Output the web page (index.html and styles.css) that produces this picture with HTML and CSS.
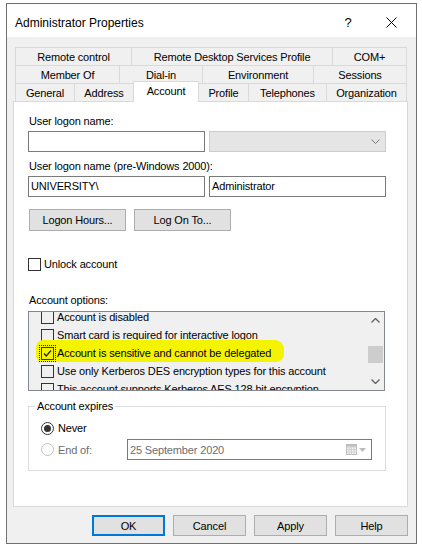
FILE: index.html
```html
<!DOCTYPE html>
<html>
<head>
<meta charset="utf-8">
<link rel="stylesheet" href="styles.css">
</head>
<body>
<div class="window">
  <div class="titlebar">
    <span class="title">Administrator Properties</span>
    <span class="cap cap-help">?</span>
    <span class="cap cap-close"><svg width="11" height="11" viewBox="0 0 11 11"><path d="M0.5 0.5 L10.5 10.5 M10.5 0.5 L0.5 10.5" stroke="#000" stroke-width="1" fill="none"/></svg></span>
  </div>
  <div class="client">
    <div class="tabs">
      <div class="tabrow">
        <div class="tab w116">Remote control</div>
        <div class="tab w201">Remote Desktop Services Profile</div>
        <div class="tab w75 last">COM+</div>
      </div>
      <div class="tabrow">
        <div class="tab w104">Member Of</div>
        <div class="tab w83">Dial-in</div>
        <div class="tab w111">Environment</div>
        <div class="tab w94 last">Sessions</div>
      </div>
      <div class="tabrow">
        <div class="tab w59">General</div>
        <div class="tab w59">Address</div>
        <div class="tab w66 selected">Account</div>
        <div class="tab w49 after-sel">Profile</div>
        <div class="tab w78">Telephones</div>
        <div class="tab w81 last">Organization</div>
      </div>
    </div>
    <div class="panel">
      <div class="lbl">User logon name:</div>
      <div class="field-row">
        <div class="input"></div>
        <div class="combo"><svg width="9" height="5" viewBox="0 0 9 5"><path d="M0.5 0.5 L4.5 4.5 L8.5 0.5" stroke="#7a7a7a" fill="none"/></svg></div>
      </div>
      <div class="lbl lbl2">User logon name (pre-Windows 2000):</div>
      <div class="field-row">
        <div class="input">UNIVERSITY\</div>
        <div class="input">Administrator</div>
      </div>
      <div class="btn-row">
        <button class="btn">Logon Hours...</button>
        <button class="btn">Log On To...</button>
      </div>
      <div class="check-row unlock">
        <span class="cb cb-white"></span>
        <span class="cb-text">Unlock account</span>
      </div>
      <div class="lbl lbl3">Account options:</div>
      <div class="list">
        <div class="list-items">
          <div class="item"><span class="cb"></span><span class="cb-text">Account is disabled</span></div>
          <div class="item"><span class="cb"></span><span class="cb-text">Smart card is required for interactive logon</span></div>
          <div class="item marked"><span class="cb checked focus"><svg width="11" height="11" viewBox="0 0 11 11"><path d="M2 5.5 L4.3 8 L9 2.5" stroke="#222" stroke-width="1.2" fill="none"/></svg></span><span class="cb-text">Account is sensitive and cannot be delegated</span></div>
          <div class="item"><span class="cb"></span><span class="cb-text">Use only Kerberos DES encryption types for this account</span></div>
          <div class="item"><span class="cb"></span><span class="cb-text">This account supports Kerberos AES 128 bit encryption.</span></div>
        </div>
        <div class="scrollbar">
          <div class="sb-arrow"><svg width="9" height="5" viewBox="0 0 9 5"><path d="M0.5 4.5 L4.5 0.5 L8.5 4.5" stroke="#606060" stroke-width="1.3" fill="none"/></svg></div>
          <div class="sb-track"><div class="sb-thumb"></div></div>
          <div class="sb-arrow"><svg width="9" height="5" viewBox="0 0 9 5"><path d="M0.5 0.5 L4.5 4.5 L8.5 0.5" stroke="#606060" stroke-width="1.3" fill="none"/></svg></div>
        </div>
      </div>
      <fieldset class="group">
        <legend>Account expires</legend>
        <div class="radio-row">
          <span class="radio on"></span>
          <span class="radio-text">Never</span>
        </div>
        <div class="radio-row row-end">
          <span class="radio off"></span>
          <span class="radio-text disabled endof">End of:</span>
          <div class="datepick">
            <span class="date-text">25 September 2020</span>
            <span class="date-icons">
              <svg width="11" height="11" viewBox="0 0 11 11"><rect x="0.5" y="0.5" width="10" height="10" fill="#f4f4f4" stroke="#bdbdbd"/><path d="M0.5 3 H10.5 M0.5 5.5 H10.5 M0.5 8 H10.5 M3 3 V10.5 M5.5 3 V10.5 M8 3 V10.5" stroke="#cfcfcf" stroke-width="1"/><rect x="0.5" y="0.5" width="10" height="2" fill="#bdbdbd"/></svg>
              <svg width="7" height="4" viewBox="0 0 7 4"><path d="M0 0 H7 L3.5 4 Z" fill="#bdbdbd"/></svg>
            </span>
          </div>
        </div>
      </fieldset>
    </div>
    <div class="footer">
      <button class="fbtn default">OK</button>
      <button class="fbtn">Cancel</button>
      <button class="fbtn">Apply</button>
      <button class="fbtn">Help</button>
    </div>
  </div>
</div>
</body>
</html>
```
FILE: styles.css
```css
html, body {
  margin: 0;
  padding: 0;
  background: #ffffff;
}
body {
  font-family: "Liberation Sans", Arial, sans-serif;
  font-size: 11px;
  color: #000;
}
.window {
  box-sizing: border-box;
  width: 411px;
  height: 541px;
  margin: 3px 0 0 6px;
  border: 1px solid #707070;
  background: #f0f0f0;
  display: flex;
  flex-direction: column;
}
.titlebar {
  box-sizing: border-box;
  height: 33px;
  padding: 4px 3px 0 8px;
  background: #fff;
  display: flex;
  align-items: center;
  font-size: 12px;
}
.title {
  flex: 1;
}
.cap {
  display: flex;
  align-items: center;
  justify-content: center;
  height: 100%;
}
.cap-help {
  width: 42px;
  font-size: 13px;
}
.cap-close {
  width: 44px;
}
.client {
  flex: 1;
  padding: 10px 8px 0 6px;
  display: flex;
  flex-direction: column;
  letter-spacing: -0.15px;
}
.tabrow {
  display: flex;
  align-items: flex-start;
  height: 18px;
  margin-left: 2px;
}
.tab {
  box-sizing: border-box;
  height: 18px;
  border-top: 1px solid #d9d9d9;
  border-left: 1px solid #d9d9d9;
  background: #f0f0f0;
  display: flex;
  align-items: center;
  justify-content: center;
  white-space: nowrap;
  flex: none;
}
.tab.last { border-right: 1px solid #d9d9d9; }
.tab.after-sel { border-left: none; }
.tab.selected {
  position: relative;
  z-index: 1;
  height: 21px;
  margin-top: -2px;
  border-right: 1px solid #d9d9d9;
  background: #fff;
  padding-bottom: 2px;
}
.w116 { width: 116px; }
.w201 { width: 201px; }
.w75 { width: 75px; }
.w104 { width: 104px; }
.w83 { width: 83px; }
.w111 { width: 111px; }
.w94 { width: 94px; }
.w59 { width: 59px; }
.w66 { width: 66px; }
.w49 { width: 49px; }
.w78 { width: 78px; }
.w81 { width: 81px; }

.panel {
  box-sizing: border-box;
  width: 395px;
  height: 406px;
  border: 1px solid #d9d9d9;
  background: #fff;
  padding: 12px 0 0 14px;
}
.lbl {
  height: 15px;
  line-height: 15px;
  padding-left: 1px;
}
.lbl2 { margin-top: 7px; }
.lbl3 { margin-top: 22px; }
.field-row {
  display: flex;
  gap: 4px;
  margin-top: 2px;
}
.input {
  box-sizing: border-box;
  width: 177px;
  height: 21px;
  border: 1px solid #7a7a7a;
  background: #fff;
  line-height: 19px;
  padding-left: 2px;
}
.combo {
  box-sizing: border-box;
  width: 177px;
  height: 21px;
  border: 1px solid #cccccc;
  background: #e5e5e5;
  display: flex;
  align-items: center;
  justify-content: flex-end;
  padding-right: 5px;
}
.btn-row {
  display: flex;
  gap: 8px;
  margin: 12px 0 0 1px;
}
.btn, .fbtn {
  box-sizing: border-box;
  font-family: inherit;
  font-size: 11px;
  letter-spacing: -0.15px;
  color: #000;
  background: #e1e1e1;
  border: 1px solid #adadad;
  padding: 0;
  margin: 0;
}
.btn {
  width: 97px;
  height: 22px;
}
.check-row {
  display: flex;
  align-items: center;
  height: 13px;
}
.unlock { margin-top: 27px; }
.cb {
  box-sizing: border-box;
  width: 13px;
  height: 13px;
  border: 1px solid #333;
  flex: none;
  display: flex;
  align-items: center;
  justify-content: center;
}
.cb-white { background: #fff; }
.cb-text {
  margin-left: 3px;
  white-space: nowrap;
  line-height: 15px;
}
.focus {
  outline: 1px dotted #222;
  outline-offset: 1px;
}
.list {
  box-sizing: border-box;
  width: 357px;
  height: 80px;
  margin-top: 3px;
  border: 1px solid #828790;
  background: #f0f0f0;
  display: flex;
  overflow: hidden;
}
.list-items {
  flex: 1;
  margin-top: -4px;
  overflow: hidden;
}
.item {
  position: relative;
  z-index: 0;
  height: 18px;
  display: flex;
  align-items: center;
  padding-left: 12px;
  white-space: nowrap;
}
.item.marked::before {
  content: "";
  position: absolute;
  z-index: -1;
  left: 7px;
  top: -4px;
  width: 248px;
  height: 22px;
  background: #f4f400;
  border-radius: 7px 9px 8px 6px;
}
.scrollbar {
  width: 17px;
  flex: none;
  display: flex;
  flex-direction: column;
  background: #f0f0f0;
}
.sb-arrow {
  height: 17px;
  display: flex;
  align-items: center;
  justify-content: center;
}
.sb-track {
  flex: 1;
  padding-top: 17px;
}
.sb-thumb {
  height: 17px;
  margin: 0 1px;
  background: #cdcdcd;
}
.group {
  box-sizing: border-box;
  width: 358px;
  margin: 8px 0 0 0;
  padding: 6px 0 10px 12px;
  border: 1px solid #dcdcdc;
  min-width: 0;
}
.group legend {
  padding: 0 2px;
  margin-left: -6px;
  line-height: 15px;
}
.radio-row {
  display: flex;
  align-items: center;
  height: 16px;
}
.row-end {
  height: 21px;
  margin-top: 3px;
}
.radio {
  box-sizing: border-box;
  width: 13px;
  height: 13px;
  border-radius: 50%;
  border: 1px solid #333;
  flex: none;
  display: flex;
  align-items: center;
  justify-content: center;
}
.radio.on::after {
  content: "";
  width: 7px;
  height: 7px;
  border-radius: 50%;
  background: #333;
}
.radio.off {
  border-color: #c2c2c2;
}
.radio-text {
  margin-left: 4px;
}
.disabled {
  color: #6d6d6d;
}
.endof {
  width: 69px;
}
.datepick {
  box-sizing: border-box;
  width: 245px;
  height: 21px;
  border: 1px solid #7a7a7a;
  background: #fff;
  display: flex;
  align-items: center;
  padding: 0 5px 0 2px;
  color: #6d6d6d;
}
.date-text {
  flex: 1;
}
.date-icons {
  display: flex;
  align-items: center;
  gap: 2px;
}
.footer {
  display: flex;
  justify-content: flex-end;
  gap: 8px;
  margin-top: 8px;
  padding-right: 0;
}
.fbtn {
  width: 73px;
  height: 21px;
}
.fbtn.default {
  border: 2px solid #0078d7;
}
```
